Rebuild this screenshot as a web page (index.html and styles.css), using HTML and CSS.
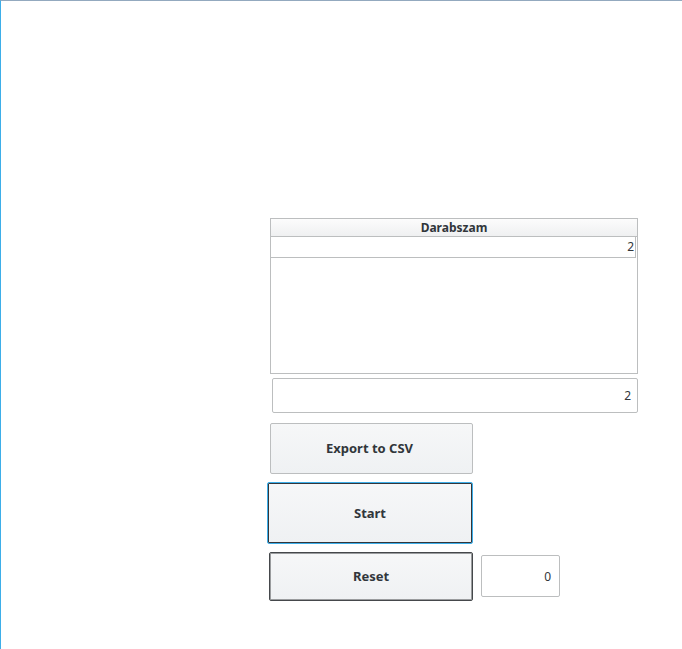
FILE: index.html
```html
<!DOCTYPE html>
<html>
<head>
<meta charset="utf-8">
<link rel="stylesheet" href="styles.css">
</head>
<body>
<div class="window">
  <div class="content">
    <div class="table">
      <div class="thead">Darabszam</div>
      <div class="row"><span class="cell">2</span></div>
      <div class="empty"></div>
    </div>
    <div class="lineedit wide">2</div>
    <button class="btn export">Export to CSV</button>
    <button class="btn start">Start</button>
    <div class="reset-row">
      <button class="btn reset">Reset</button>
      <div class="lineedit small">0</div>
    </div>
  </div>
</div>
</body>
</html>
```

FILE: styles.css
```css
html, body {
  margin: 0;
  padding: 0;
  background: #ffffff;
}
body {
  font-family: "Noto Sans", "Open Sans", sans-serif;
  color: #31363b;
  font-size: 12px;
}
.window {
  width: 682px;
  height: 649px;
  box-sizing: border-box;
  border-top: 1px solid #93a9bf;
  border-left: 1px solid #3daee9;
  background: #ffffff;
}
.content {
  display: flex;
  flex-direction: column;
  align-items: flex-start;
  padding: 217px 0 0 269px;
}
.table {
  width: 366px;
  height: 154px;
  border: 1px solid #bcbebf;
  display: flex;
  flex-direction: column;
  box-sizing: content-box;
}
.thead {
  height: 17px;
  line-height: 17px;
  text-align: center;
  font-weight: bold;
  background: linear-gradient(#fcfcfc, #eff0f1);
  border-bottom: 1px solid #bcbebf;
}
.row {
  height: 20px;
  border-bottom: 1px solid #bcbebf;
  border-right: 1px solid #bcbebf;
  margin-right: 1px;
  display: flex;
  align-items: center;
  justify-content: flex-end;
  padding-right: 1px;
}
.cell {
  line-height: 20px;
}
.empty {
  flex: 1;
}
.lineedit {
  box-sizing: border-box;
  border: 1px solid #bcbebf;
  border-radius: 2px;
  background: #ffffff;
  text-align: right;
  display: flex;
  align-items: center;
  justify-content: flex-end;
}
.wide {
  width: 366px;
  height: 35px;
  margin: 4px 0 0 2px;
  padding-right: 6px;
}
.btn {
  font-family: inherit;
  font-size: 13px;
  font-weight: bold;
  color: #31363b;
  box-sizing: border-box;
  background: linear-gradient(#f6f7f8, #eff1f3);
  border: 1px solid #bcbebf;
  border-radius: 2px;
  padding: 0;
  margin: 0;
}
.export {
  width: 203px;
  height: 51px;
  margin-top: 10px;
  margin-left: 0;
  padding: 0 4px 2px 0;
}
.start {
  width: 206px;
  height: 62px;
  margin-top: 8px;
  margin-left: -3px;
  border: 1px solid #3daee9;
  box-shadow: inset 0 0 0 1px #31363b;
}
.reset-row {
  display: flex;
  align-items: flex-start;
  margin-top: 8px;
  margin-left: -1px;
  gap: 8px;
}
.reset {
  width: 204px;
  height: 49px;
  border: 1px solid #45484b;
  box-shadow: inset 0 0 0 1px #9a9c9e;
  padding-bottom: 2px;
}
.small {
  width: 79px;
  height: 42px;
  margin-top: 3px;
  padding-right: 8px;
}
```
